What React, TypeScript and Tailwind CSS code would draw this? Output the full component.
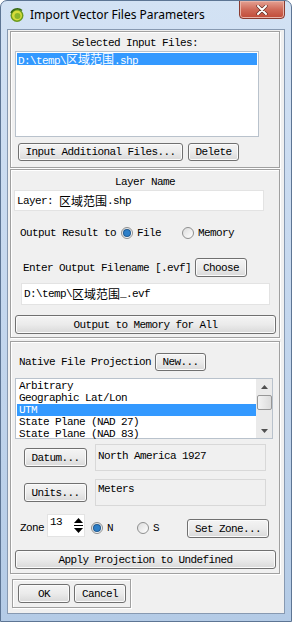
import React from "react";

const mono =
  "font-['Liberation_Mono','Noto_Sans_CJK_SC',monospace] text-[11px] tracking-[-0.6px] text-black leading-[12px] whitespace-pre";

function Cjk({ children }: { children: React.ReactNode }) {
  return <span className="font-['Noto_Sans_CJK_SC',sans-serif] text-[12px] tracking-normal">{children}</span>;
}

function Btn({ children, className = "" }: { children: React.ReactNode; className?: string }) {
  return (
    <div
      className={`flex items-center justify-center rounded-[3px] border border-[#707070] bg-linear-to-b from-[#f4f4f4] via-[#ebebeb] to-[#d9d9d9] shadow-[inset_0_0_0_1px_#fbfbfb] ${mono} ${className}`}
    >
      {children}
    </div>
  );
}

function Radio({ on }: { on?: boolean }) {
  return (
    <div className="flex h-[12px] w-[12px] items-center justify-center rounded-full border border-[#8e8f8f] bg-linear-to-br from-[#dcdcdc] to-[#ffffff]">
      {on && <div className="h-[6px] w-[6px] rounded-full bg-[#2d7fc8] shadow-[0_0_0_1px_#1e5a92]" />}
    </div>
  );
}

function Panel({ children, className = "" }: { children: React.ReactNode; className?: string }) {
  return (
    <div className={`flex flex-col border border-[#a0a0a0] shadow-[inset_1px_1px_0_#ffffff,1px_1px_0_#ffffff] ${className}`}>
      {children}
    </div>
  );
}

export default function App() {
  return (
    <div className="flex h-[622px] w-[292px] flex-col overflow-hidden rounded-t-[7px] border border-[#5d7594] bg-linear-to-b from-[#d3e2f4] via-[#c4d7ee] to-[#b4cbe6]">
      {/* title bar */}
      <div className="relative flex h-[28px] items-center pl-[8px]">
        <svg width="16" height="16" viewBox="0 0 16 16">
          <circle cx="8" cy="8.5" r="6.5" fill="#6a9b1f" />
          <circle cx="8" cy="8.5" r="5" fill="#d6dc3a" />
          <circle cx="8.5" cy="9" r="3" fill="#8ab52a" />
          <path d="M2 6 A7 7 0 0 1 13 3.5" stroke="#3a6b14" strokeWidth="1.6" fill="none" />
        </svg>
        <span className="ml-[5px] font-['Noto_Sans',sans-serif] text-[12px] text-black">Import Vector Files Parameters</span>
        <div className="absolute right-[6px] top-[-1px] flex h-[19px] w-[46px] items-center justify-center rounded-b-[4px] border border-[#8a3b30] bg-linear-to-b from-[#e4a193] via-[#cf6a59] to-[#c04a37] shadow-[inset_0_0_0_1px_#e9b3a8]">
          <svg width="12" height="10" viewBox="0 0 12 10">
            <path d="M2 1 L10 9 M10 1 L2 9" stroke="#5a2a22" strokeWidth="3.2" strokeLinecap="round" />
            <path d="M2 1 L10 9 M10 1 L2 9" stroke="#ffffff" strokeWidth="2" strokeLinecap="round" />
          </svg>
        </div>
      </div>

      {/* client area */}
      <div className="mx-[6px] flex h-[585px] flex-col border border-[#8799b1] bg-[#f0f0f0] pl-[2px] pt-[1px]">
        {/* panel 1 */}
        <Panel className="h-[137px] w-[270px]">
          <div className={`${mono} mt-[5px] w-[248px] text-center`}>Selected Input Files:</div>
          <div className="ml-[4px] mt-[2px] h-[86px] w-[244px] border border-[#b9c2cc] bg-white p-[1px]">
            <div className={`${mono} h-[12px] bg-[#3399ff] pl-[1px] text-white`}>
              D:\temp\<Cjk>区域范围</Cjk>.shp
            </div>
          </div>
          <div className="ml-[7px] mt-[6px] flex gap-[5px]">
            <Btn className="h-[18px] w-[165px]">Input Additional Files...</Btn>
            <Btn className="h-[18px] w-[51px]">Delete</Btn>
          </div>
        </Panel>

        {/* panel 2 */}
        <Panel className="mt-[1px] h-[169px] w-[270px]">
          <div className={`${mono} mt-[6px] text-center`}>Layer Name</div>
          <div className={`${mono} ml-[3px] mt-[2px] flex h-[21px] w-[250px] items-center border border-[#e3e3e3] bg-white pl-[2px]`}>
            {"Layer: "}<Cjk>区域范围</Cjk>.shp
          </div>
          <div className="ml-[9px] mt-[15px] flex h-[14px] items-center">
            <span className={mono}>Output Result to</span>
            <div className="ml-[5px]">
              <Radio on />
            </div>
            <span className={`${mono} ml-[4px]`}>File</span>
            <div className="ml-[21px]">
              <Radio />
            </div>
            <span className={`${mono} ml-[4px]`}>Memory</span>
          </div>
          <div className="ml-[12px] mt-[18px] flex h-[19px] items-center">
            <span className={mono}>Enter Output Filename [.evf]</span>
            <Btn className="ml-[4px] h-[19px] w-[52px]">Choose</Btn>
          </div>
          <div className={`${mono} ml-[10px] mt-[6px] flex h-[22px] w-[249px] items-center border border-[#e3e3e3] bg-white pl-[2px]`}>
            D:\temp\<Cjk>区域范围</Cjk>_.evf
          </div>
          <Btn className="ml-[4px] mt-[10px] h-[19px] w-[261px]">Output to Memory for All</Btn>
        </Panel>

        {/* panel 3 */}
        <Panel className="mt-[3px] h-[233px] w-[270px]">
          <div className="ml-[8px] mt-[11px] flex h-[18px] items-center">
            <span className={mono}>Native File Projection</span>
            <Btn className="ml-[4px] h-[18px] w-[51px]">New...</Btn>
          </div>
          <div className="ml-[4px] mt-[7px] flex h-[61px] w-[258px] border border-[#b9c2cc] bg-white">
            <div className="flex flex-1 flex-col pl-[1px] pt-[1px]">
              <div className={`${mono} h-[12px] pl-[2px]`}>Arbitrary</div>
              <div className={`${mono} h-[12px] pl-[2px]`}>Geographic Lat/Lon</div>
              <div className={`${mono} h-[12px] bg-[#3399ff] pl-[2px] text-white`}>UTM</div>
              <div className={`${mono} h-[12px] pl-[2px]`}>State Plane (NAD 27)</div>
              <div className={`${mono} h-[12px] pl-[2px]`}>State Plane (NAD 83)</div>
            </div>
            <div className="flex w-[16px] flex-col items-center bg-[#eaeaea]">
              <div className="flex h-[16px] w-full items-center justify-center">
                <svg width="7" height="4" viewBox="0 0 7 4">
                  <path d="M0 4 L3.5 0 L7 4 Z" fill="#505050" />
                </svg>
              </div>
              <div className="h-[15px] w-[15px] rounded-[2px] border border-[#979797] bg-linear-to-r from-[#f3f3f3] to-[#dcdcdc]" />
              <div className="flex-1" />
              <div className="flex h-[14px] w-full items-center justify-center">
                <svg width="7" height="4" viewBox="0 0 7 4">
                  <path d="M0 0 L3.5 4 L7 0 Z" fill="#505050" />
                </svg>
              </div>
            </div>
          </div>
          <div className="ml-[13px] mt-[5px] flex h-[27px] items-start">
            <Btn className="mt-[4px] h-[19px] w-[63px]">Datum...</Btn>
            <div className={`${mono} ml-[8px] h-[27px] w-[171px] border border-[#d8d8d8] bg-[#f0f0f0] pl-[2px] pt-[5px]`}>
              North America 1927
            </div>
          </div>
          <div className="ml-[13px] mt-[8px] flex h-[27px] items-start">
            <Btn className="mt-[4px] h-[19px] w-[63px]">Units...</Btn>
            <div className={`${mono} ml-[8px] h-[27px] w-[171px] border border-[#d8d8d8] bg-[#f0f0f0] pl-[2px] pt-[3px]`}>
              Meters
            </div>
          </div>
          <div className="ml-[9px] mt-[8px] flex h-[23px] items-center">
            <span className={`${mono} mt-[4px]`}>Zone</span>
            <div className="ml-[3px] flex h-[23px] w-[38px] border border-[#e3e3e3] bg-white">
              <span className={`${mono} flex-1 pl-[2px] pt-[1px]`}>13</span>
              <div className="flex w-[11px] flex-col items-center justify-center gap-[2px]">
                <svg width="9" height="5" viewBox="0 0 9 5">
                  <path d="M0 5 L4.5 0 L9 5 Z" fill="#000" />
                </svg>
                <div className="h-[1px] w-[9px] bg-[#000]" />
                <svg width="9" height="5" viewBox="0 0 9 5">
                  <path d="M0 0 L4.5 5 L9 0 Z" fill="#000" />
                </svg>
              </div>
            </div>
            <div className="ml-[6px] mt-[4px]">
              <Radio on />
            </div>
            <span className={`${mono} ml-[4px] mt-[4px]`}>N</span>
            <div className="ml-[24px] mt-[4px]">
              <Radio />
            </div>
            <span className={`${mono} ml-[4px] mt-[4px]`}>S</span>
            <Btn className="ml-[28px] mt-[6px] h-[19px] w-[82px]">Set Zone...</Btn>
          </div>
          <Btn className="ml-[4px] mt-[13px] h-[19px] w-[261px]">Apply Projection to Undefined</Btn>
        </Panel>

        {/* panel 4 */}
        <Panel className="ml-[2px] mt-[5px] h-[29px] w-[119px]">
          <div className="ml-[5px] mt-[4px] flex gap-[4px]">
            <Btn className="h-[19px] w-[52px]">OK</Btn>
            <Btn className="h-[19px] w-[52px]">Cancel</Btn>
          </div>
        </Panel>
      </div>
    </div>
  );
}
